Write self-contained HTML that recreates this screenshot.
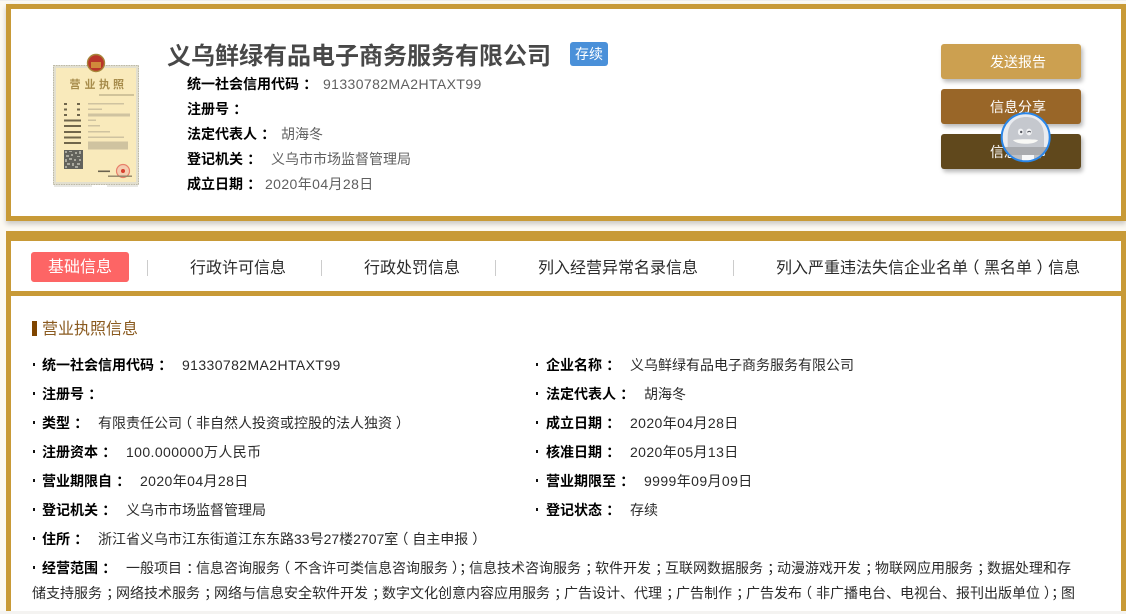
<!DOCTYPE html>
<html lang="zh">
<head>
<meta charset="utf-8">
<title>义乌鲜绿有品电子商务服务有限公司</title>
<style>
html,body{margin:0;padding:0;width:1126px;height:614px;overflow:hidden;background:#fcf9f2;}
body{position:relative;font-family:"Liberation Sans","Noto Sans CJK SC",sans-serif;font-size:14px;color:#333;}
.a{position:absolute;white-space:nowrap;line-height:20px;height:20px;}
.box{position:absolute;box-sizing:border-box;background:#fff;}
.b{font-weight:bold;color:#000;}
.g{color:#5f5f5f;}
.v{color:#2a2a2a;}
.n{letter-spacing:.4px;}
i{font-style:normal;position:relative;left:.3em;}
i.o{left:-.28em;}
i.c{left:.28em;}
.btn{position:absolute;left:941px;width:140px;height:35px;border-radius:3px;color:#fff;line-height:37px;box-shadow:2px 3px 4px rgba(0,0,0,.28);}
.btn span{position:absolute;left:49px;}
.sep{position:absolute;top:260px;width:1px;height:16px;background:#ccc;}
.tab{font-size:16px;color:#2a2a2a;top:259px;}
.dot{position:absolute;width:2px;height:3px;background:#111;}
</style>
</head>
<body>
<div style="position:absolute;left:0;top:0;width:1126px;height:1px;background:#eeeeee;"></div>
<div class="box" style="left:6px;top:4px;width:1120px;height:217px;border:5px solid #c89a37;box-shadow:0 3px 5px rgba(0,0,0,.2);"></div>

<svg style="position:absolute;left:50px;top:50px" width="92" height="140" viewBox="0 0 92 140">
<defs><filter id="bl" x="-5%" y="-5%" width="110%" height="110%"><feGaussianBlur stdDeviation="0.35"/></filter></defs>
<g filter="url(#bl)">
<rect x="3" y="15" width="86" height="120" fill="#e2dfcf"/>
<rect x="3.5" y="15.5" width="85" height="119" fill="none" stroke="#bdbaa8" stroke-width="1" stroke-dasharray="1.5 1"/>
<rect x="6" y="18" width="80" height="114" fill="#f9eabb"/>
<circle cx="46" cy="13" r="8.5" fill="#b9342a"/>
<circle cx="46" cy="13" r="8.5" fill="none" stroke="#a8853a" stroke-width="1.4"/>
<rect x="41" y="12" width="10" height="6" fill="#d08a3a"/>
<text y="38" font-size="11" font-weight="bold" fill="#a78c4c" font-family="'Noto Sans CJK SC',sans-serif" x="19.5 34.5 49 63">营业执照</text>
<rect x="49" y="44.5" width="35" height="1" fill="#a89c78"/>
<g fill="#6f664c">
<rect x="14" y="53" width="3" height="2"/><rect x="27" y="53" width="3" height="2"/>
<rect x="14" y="58.5" width="3" height="2"/><rect x="27" y="58.5" width="3" height="2"/>
<rect x="14" y="64" width="3" height="2"/><rect x="27" y="64" width="3" height="2"/>
<rect x="14" y="69.5" width="17" height="2"/>
<rect x="14" y="75" width="17" height="2"/>
<rect x="14" y="81" width="17" height="2"/>
<rect x="14" y="86.5" width="17" height="2"/>
<rect x="14" y="92" width="17" height="2"/>
</g>
<g fill="#cfc3a0">
<rect x="38" y="53" width="36" height="1.5"/><rect x="38" y="58.5" width="14" height="1.5"/><rect x="38" y="63.5" width="42" height="3"/>
<rect x="38" y="69.5" width="8" height="1.5"/><rect x="38" y="75" width="12" height="1.5"/><rect x="38" y="81" width="22" height="1.5"/>
<rect x="38" y="86.5" width="36" height="1.5"/><rect x="38" y="91.5" width="40" height="8"/>
</g>
<rect x="14" y="100" width="19" height="19" fill="#62625c"/>
<path d="M15 101h2v2h-2zM19 101h3v1h-3zM25 102h2v2h-2zM29 101h2v3h-2zM16 105h3v2h-3zM21 104h2v2h-2zM27 106h3v1h-3zM15 109h2v3h-2zM19 108h3v2h-3zM24 109h2v2h-2zM29 109h2v2h-2zM17 113h3v2h-3zM22 113h2v3h-2zM27 113h3v2h-3zM15 116h2v2h-2zM25 116h3v2h-3z" fill="#a9a89e"/>
<circle cx="73" cy="121" r="6.5" fill="#f4cdb0" stroke="#e8806a" stroke-width="1.2"/>
<circle cx="73" cy="121" r="2" fill="#d8402e"/>
<rect x="48" y="120.5" width="12" height="1.6" fill="#6b6450"/>
<rect x="58" y="125.5" width="24" height="1.4" fill="#8f8468"/>
<rect x="4" y="135.5" width="38" height="1" fill="#d0d0ca"/><rect x="57" y="135.5" width="31" height="1" fill="#d0d0ca"/>
</g>
</svg>

<div class="a" style="left:167px;top:40px;height:34px;line-height:34px;font-size:24px;font-weight:bold;color:#484848;">义乌鲜绿有品电子商务服务有限公司</div>
<div class="a" style="left:570px;top:42px;width:38px;height:24px;line-height:25px;background:#4a90d9;border-radius:3px;color:#fff;text-align:center;">存续</div>

<div class="a b" style="left:187px;top:74px;">统一社会信用代码<i>：</i></div><div class="a g n" style="left:323px;top:74px;">91330782MA2HTAXT99</div>
<div class="a b" style="left:187px;top:99px;">注册号<i>：</i></div>
<div class="a b" style="left:187px;top:124px;">法定代表人<i>：</i></div><div class="a g" style="left:281px;top:124px;">胡海冬</div>
<div class="a b" style="left:187px;top:149px;">登记机关<i>：</i></div><div class="a g" style="left:271px;top:149px;">义乌市市场监督管理局</div>
<div class="a b" style="left:187px;top:174px;">成立日期<i>：</i></div><div class="a g n" style="left:265px;top:174px;">2020年04月28日</div>

<div class="btn" style="top:44px;background:#cca050;"><span>发送报告</span></div>
<div class="btn" style="top:89px;background:#996628;"><span>信息分享</span></div>
<div class="btn" style="top:134px;background:#60481c;"><span>信息打印</span></div>

<svg style="position:absolute;left:1000px;top:112px" width="52" height="52" viewBox="0 0 52 52">
<defs><clipPath id="c"><circle cx="25.7" cy="25.3" r="24"/></clipPath><filter id="bl2"><feGaussianBlur stdDeviation="0.3"/></filter></defs>
<circle cx="25.7" cy="25.3" r="24" fill="#e9ebef"/>
<g clip-path="url(#c)" filter="url(#bl2)">
<path d="M7.7 38V24C7.7 12 15 5 26 5S44 12 44 24V38Z" fill="#c5c8ce"/>
<rect x="0" y="35" width="52" height="8" fill="#a8aaae"/>
<rect x="4" y="43" width="44" height="9" fill="#bdbfc3"/>
<rect x="22" y="43" width="12" height="8" fill="#f6f7f8"/>
<path d="M13 28C19 27 32 27 38 28C36 33 16 33 13 28Z" fill="#f8f8f5"/>
<ellipse cx="20.7" cy="20" rx="2.8" ry="3.4" fill="#f2f3f5"/>
<ellipse cx="29" cy="20" rx="2.8" ry="3.4" fill="#f2f3f5"/>
<circle cx="21.2" cy="20" r="1.2" fill="#555860"/>
<path d="M27.4 20.4Q29 18.4 30.8 20.2" stroke="#555860" stroke-width="1.1" fill="none"/>
</g>
<circle cx="25.7" cy="25.3" r="24" fill="none" stroke="#2a86e8" stroke-width="2"/>
</svg>

<div class="box" style="left:6px;top:231px;width:1120px;height:380px;border:solid #c89a37;border-width:10px 5px 0 5px;"></div>
<div style="position:absolute;left:11px;top:291px;width:1110px;height:5px;background:#c89a37;"></div>
<div style="position:absolute;left:0;top:611px;width:1126px;height:3px;background:#f4f3f1;"></div>

<div class="a" style="left:31px;top:252px;width:98px;height:30px;line-height:32px;background:#fd6565;border-radius:3px;color:#fff;font-size:16px;text-align:center;">基础信息</div>
<div class="sep" style="left:147px;"></div>
<div class="a tab" style="left:190px;">行政许可信息</div>
<div class="sep" style="left:321px;"></div>
<div class="a tab" style="left:364px;">行政处罚信息</div>
<div class="sep" style="left:495px;"></div>
<div class="a tab" style="left:538px;">列入经营异常名录信息</div>
<div class="sep" style="left:733px;"></div>
<div class="a tab" style="left:776px;">列入严重违法失信企业名单<i class="o">（</i>黑名单<i class="c">）</i>信息</div>

<div style="position:absolute;left:32px;top:321px;width:5px;height:15px;background:#7f4500;"></div>
<div class="a" style="left:42px;top:320px;font-size:16px;color:#8a5a1f;">营业执照信息</div>

<div class="dot" style="left:33px;top:363px"></div><div class="a b" style="left:42px;top:355px;">统一社会信用代码<i>：</i></div><div class="a v n" style="left:182px;top:355px;">91330782MA2HTAXT99</div>
<div class="dot" style="left:536px;top:363px"></div><div class="a b" style="left:546px;top:355px;">企业名称<i>：</i></div><div class="a v" style="left:630px;top:355px;">义乌鲜绿有品电子商务服务有限公司</div>

<div class="dot" style="left:33px;top:392px"></div><div class="a b" style="left:42px;top:384px;">注册号<i>：</i></div>
<div class="dot" style="left:536px;top:392px"></div><div class="a b" style="left:546px;top:384px;">法定代表人<i>：</i></div><div class="a v" style="left:644px;top:384px;">胡海冬</div>

<div class="dot" style="left:33px;top:421px"></div><div class="a b" style="left:42px;top:413px;">类型<i>：</i></div><div class="a v" style="left:98px;top:413px;">有限责任公司<i class="o">（</i>非自然人投资或控股的法人独资<i class="c">）</i></div>
<div class="dot" style="left:536px;top:421px"></div><div class="a b" style="left:546px;top:413px;">成立日期<i>：</i></div><div class="a v n" style="left:630px;top:413px;">2020年04月28日</div>

<div class="dot" style="left:33px;top:450px"></div><div class="a b" style="left:42px;top:442px;">注册资本<i>：</i></div><div class="a v n" style="left:126px;top:442px;">100.000000万人民币</div>
<div class="dot" style="left:536px;top:450px"></div><div class="a b" style="left:546px;top:442px;">核准日期<i>：</i></div><div class="a v n" style="left:630px;top:442px;">2020年05月13日</div>

<div class="dot" style="left:33px;top:479px"></div><div class="a b" style="left:42px;top:471px;">营业期限自<i>：</i></div><div class="a v n" style="left:140px;top:471px;">2020年04月28日</div>
<div class="dot" style="left:536px;top:479px"></div><div class="a b" style="left:546px;top:471px;">营业期限至<i>：</i></div><div class="a v n" style="left:644px;top:471px;">9999年09月09日</div>

<div class="dot" style="left:33px;top:508px"></div><div class="a b" style="left:42px;top:500px;">登记机关<i>：</i></div><div class="a v" style="left:126px;top:500px;">义乌市市场监督管理局</div>
<div class="dot" style="left:536px;top:508px"></div><div class="a b" style="left:546px;top:500px;">登记状态<i>：</i></div><div class="a v" style="left:630px;top:500px;">存续</div>

<div class="dot" style="left:33px;top:537px"></div><div class="a b" style="left:42px;top:529px;">住所<i>：</i></div><div class="a v" style="left:98px;top:529px;">浙江省义乌市江东街道江东东路33号27楼2707室<i class="o">（</i>自主申报<i class="c">）</i></div>

<div class="dot" style="left:33px;top:566px"></div><div class="a b" style="left:42px;top:558px;">经营范围<i>：</i></div><div class="a v" style="left:126px;top:558px;">一般项目<i>：</i>信息咨询服务<i class="o">（</i>不含许可类信息咨询服务<i class="c">）</i><i>；</i>信息技术咨询服务<i>；</i>软件开发<i>；</i>互联网数据服务<i>；</i>动漫游戏开发<i>；</i>物联网应用服务<i>；</i>数据处理和存</div>
<div class="a v" style="left:32px;top:583px;">储支持服务<i>；</i>网络技术服务<i>；</i>网络与信息安全软件开发<i>；</i>数字文化创意内容应用服务<i>；</i>广告设计、代理<i>；</i>广告制作<i>；</i>广告发布<i class="o">（</i>非广播电台、电视台、报刊出版单位<i class="c">）</i><i>；</i>图</div>
</body>
</html>
